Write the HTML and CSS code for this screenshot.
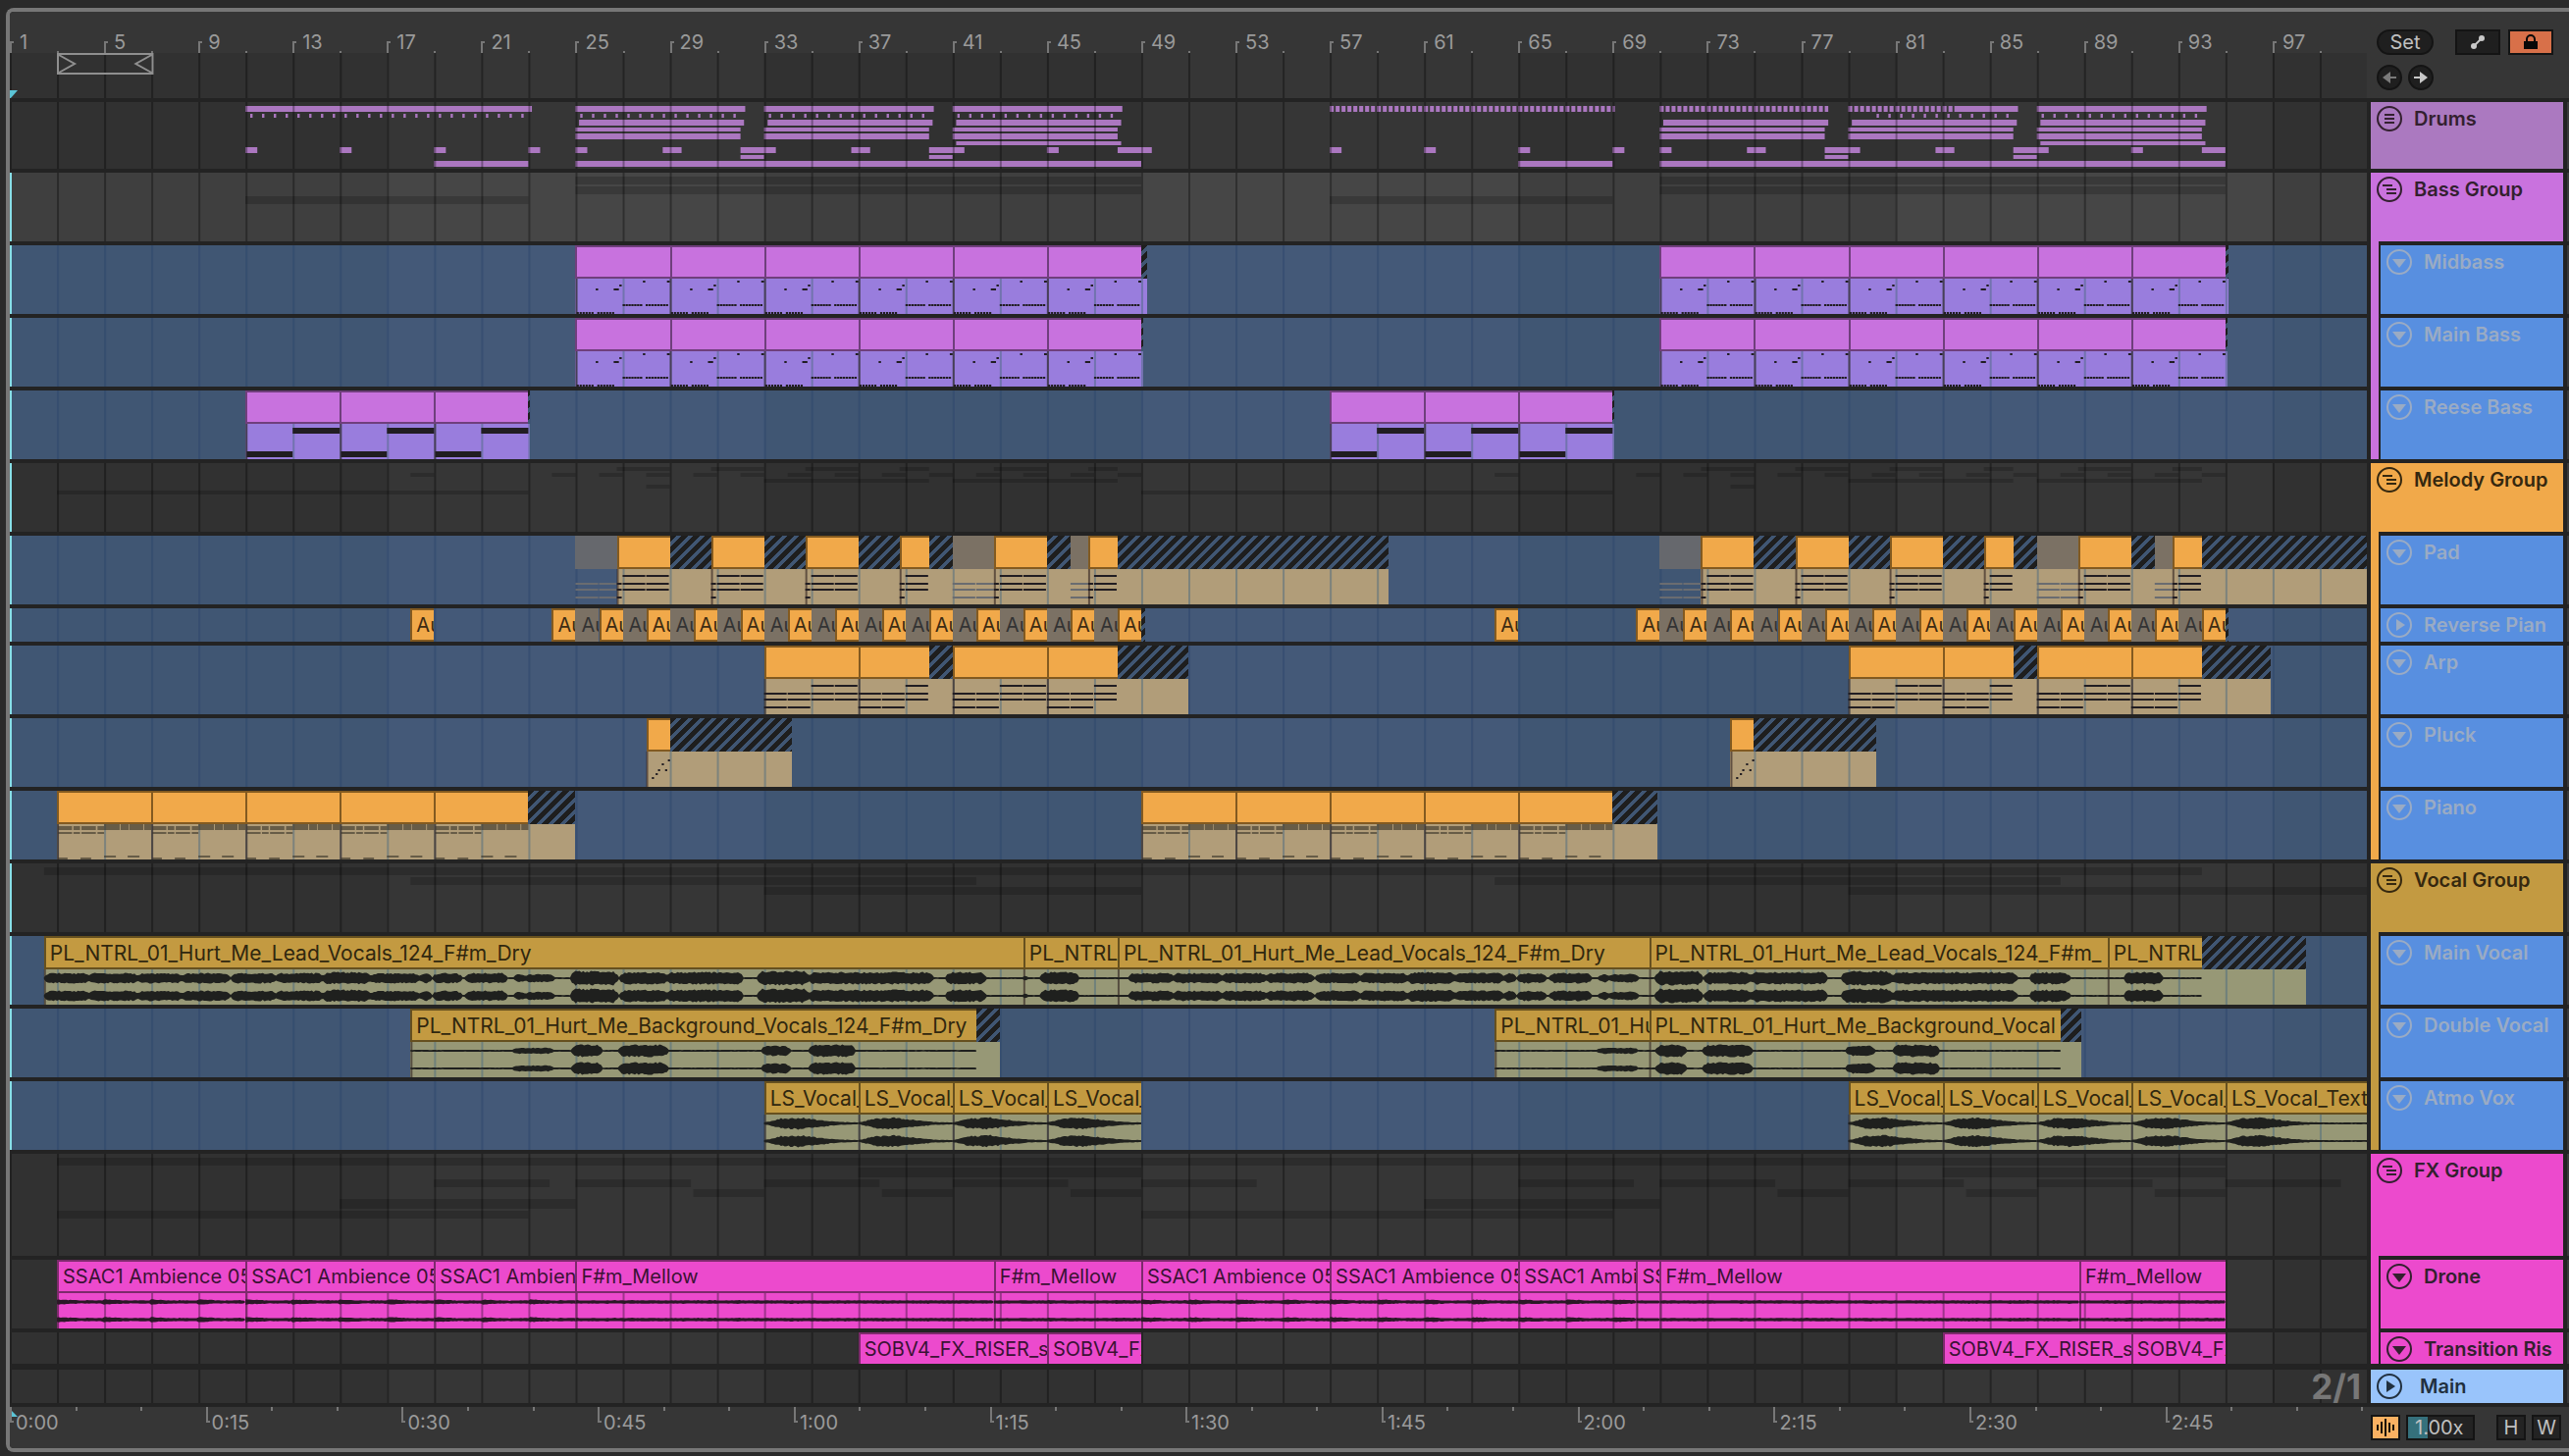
FILE: index.html
```html
<!DOCTYPE html>
<html lang="en">
<head>
  <meta charset="UTF-8" />
  <meta name="viewport" content="width=device-width, initial-scale=1.0"/>
  <title>Arrangement</title>
  <link rel="stylesheet" href="styles.css">
</head>
<body>
  <main class="arranger">
    <header class="top">
      <div class="ruler">
        <div class="ruler-labels" id="bar-ruler"></div>
        <div class="scrub" id="scrub">
          <svg class="loop" viewBox="0 0 98 22" preserveAspectRatio="none" aria-hidden="true">
            <path d="M1 1H97V21H1ZM2 2L18 11L2 20M96 2L80 11L96 20" />
          </svg>
          <svg class="marker marker-top" viewBox="0 0 8 8" aria-hidden="true"><path d="M0 0H8L1 8H0Z" /></svg>
        </div>
      </div>
      <div class="controls">
        <div class="controls-row">
          <button class="pill">Set</button>
          <button class="tool tool-first" aria-label="Automation mode">
            <svg width="16" height="16" viewBox="0 0 16 16"><path d="M4 12L12 4" stroke="#c8c8c8" stroke-width="2"/><circle cx="4" cy="12" r="3" fill="#c8c8c8"/><circle cx="12" cy="4" r="3" fill="#c8c8c8"/></svg>
          </button>
          <button class="tool tool-lock" aria-label="Lock envelopes">
            <svg width="14" height="16" viewBox="0 0 14 16"><path d="M0 7H14V15H0Z" fill="#080808"/><path d="M3 7V5A4 4 0 0 1 11 5V7" fill="none" stroke="#080808" stroke-width="2"/></svg>
          </button>
        </div>
        <div class="controls-row">
          <button class="round" aria-label="Previous locator">
            <svg width="14" height="12" viewBox="0 0 14 12"><path d="M0 6L8 0V5H14V7H8V12Z" fill="#7a7a7a"/></svg>
          </button>
          <button class="round" aria-label="Next locator">
            <svg width="14" height="12" viewBox="0 0 14 12"><path d="M14 6L6 0V5H0V7H6V12Z" fill="#c8c8c8"/></svg>
          </button>
        </div>
      </div>
    </header>

    <section class="tracks" id="tracks"></section>

    <footer class="bottom">
      <div class="time-ruler" id="time-ruler">
        <svg class="marker marker-bottom" viewBox="0 0 8 8" aria-hidden="true"><path d="M0 0L8 8H0Z" /></svg>
      </div>
      <div class="bottom-controls">
        <button class="wave-btn" aria-label="Waveform zoom">
          <svg width="20" height="18" viewBox="0 0 20 18"><path d="M2 6V12M6 3V15M10 0V18M14 4V14M18 6V12" stroke="#1a1206" stroke-width="2"/></svg>
        </button>
        <input class="zoom-input" value="1.00x" aria-label="Waveform height">
        <button class="small-btn small-first">H</button>
        <button class="small-btn">W</button>
      </div>
    </footer>
  </main>
  <script src="script.js"></script>
</body>
</html>
```
FILE: styles.css
```css
* { box-sizing: border-box; }
body {
  margin: 0;
  padding: 8px 0 4px 6px;
  background: #2a2a2a;
  font-family: Inter, "Liberation Sans", sans-serif;
  font-size: 20px;
  color: #9a9a9a;
}
button, input {
  font: inherit;
  color: #c0c0c0;
  padding: 0;
  margin: 0;
  cursor: pointer;
}
.arranger {
  border: 4px solid #777;
  border-right: none;
  border-radius: 8px 0 0 8px;
  background: #232323;
  overflow: hidden;
}

/* bar ruler */
.top {
  display: grid;
  grid-template-columns: 1fr 206px;
  height: 88px;
  background: #363636;
}
.ruler-labels {
  position: relative;
  height: 42px;
  overflow: hidden;
}
.scrub {
  position: relative;
  height: 46px;
}
.bar-label {
  position: absolute;
  top: 30px;
  height: 12px;
  border-left: 2px solid #777;
}
.bar-label::before {
  content: "";
  position: absolute;
  width: 2px;
  height: 2px;
  background: #777;
}
.bar-label span {
  position: absolute;
  left: 8px;
  top: -11px;
  line-height: 24px;
}
.bar-minor {
  position: absolute;
  bottom: 0;
  width: 2px;
  height: 2px;
  background: #777;
}
.loop {
  position: absolute;
  left: 2%;
  top: 0;
  width: 4.1%;
  height: 22px;
}
.loop path { fill: none; stroke: #8f8f8f; stroke-width: 2; }
.marker { position: absolute; left: 0; width: 8px; height: 8px; fill: #5bc4d6; }
.marker-top { bottom: 0; }
.marker-bottom { top: 2px; }

.controls { padding: 18px 0 0 10px; }
.controls-row { display: flex; gap: 6px; margin-bottom: 10px; }
.pill, .round, .tool {
  display: flex;
  align-items: center;
  justify-content: center;
  height: 26px;
  background: #1f1f1f;
  border: 2px solid #141414;
}
.pill { width: 58px; border-radius: 13px; }
.round { width: 26px; border-radius: 13px; }
.tool { width: 46px; }
.tool-first { margin-left: 16px; }
.tool-lock { margin-left: 2px; background: #d87049; }

/* tracks */
.track {
  display: grid;
  grid-template-columns: minmax(0, 1fr) 196px 2px;
  gap: 4px;
  margin-top: 4px;
}
.track.last { margin-top: 6px; }
.edge { background: #3a3a3a; }
.lane { position: relative; overflow: hidden; }
.lane.h34 { height: 34px; }
.lane.h32 { height: 32px; }
.lane.h68 { height: 68px; }
.lane.h70 { height: 70px; }
.lane.h104 { height: 104px; }
.lane, .scrub { background: repeating-linear-gradient(90deg, #313131 0 16%, #363636 16% 32%); }
.lane.selected { background: repeating-linear-gradient(90deg, #3f3f3f 0 16%, #464646 16% 32%); }
.lane.blue { background: repeating-linear-gradient(90deg, #405673 0 16%, #445978 16% 32%); }
.lane svg, .scrub .grid {
  position: absolute;
  inset: 0;
  width: 100%;
  height: 100%;
}
.lane.cursor::after {
  content: "";
  position: absolute;
  left: 0;
  top: 0;
  width: 2px;
  height: 100%;
  background: #88dfe8;
}
.grid { fill: #000; fill-opacity: .32; }
.blue .grid { fill: #2c456b; fill-opacity: .5; }
.overview { fill: #000; fill-opacity: .18; }
.drum-notes { fill: #ab77c0; }

.clip {
  position: absolute;
  top: 0;
  height: 100%;
  display: flex;
  flex-direction: column;
  overflow: hidden;
}
.clip-title {
  height: 34px;
  flex: none;
  padding-left: 4px;
  border: 2px solid;
  border-right: none;
  line-height: 31px;
  white-space: nowrap;
  overflow: hidden;
}
.clip-body { flex: 1; }
.bass .clip-title { background: #c872de; border-color: #6f3f7c; }
.bass .clip-body { background: #997ddd; }
.melody .clip-title { background: #f1a94a; border-color: #835a20; color: #3d2b12; }
.melody .clip-body { background: #b19d79; }
.vocal .clip-title { background: #c39a41; border-color: #66501f; color: #30270f; font-size: 21px; }
.vocal .clip-body { background: #979876; }
.fx .clip-title { background: #ec4acd; border-color: #7d2a6c; color: #3b1234; }
.fx .clip-body { background: #ec4acd; }
.h32 .clip-title { border-bottom: none; }
.clip.tail .clip-title {
  border: none;
  background-color: #405673;
  background-image: linear-gradient(135deg, #1e1e1e 29%, transparent 29% 50%, #1e1e1e 50% 79%, transparent 79%);
  background-size: 12px 12px;
}
.clip.muted .clip-title { background: #7b7164; border-color: transparent; color: #333; }
.clip.muted.bare .clip-title { background: #66686d; }
.clip.muted.bare .clip-body { background: none; }

.body-grid { fill: #4a6a80; fill-opacity: .5; }
.fx .body-grid { fill: #6b2560; fill-opacity: .6; }
.clip-edge { fill: #2b1c1c; fill-opacity: .6; }
.fx .clip-edge { fill: #7d2a6c; fill-opacity: 1; }
.notes { fill: #211d22; }
.notes-soft { fill: #3a3428; fill-opacity: .62; }
.notes-muted { fill: #6a6c70; }
.wave { fill: #1f201e; }
.fx .wave { fill: #2a1826; }

/* track headers */
.head { display: grid; grid-template-columns: 1fr; }
.head.child { grid-template-columns: 8px 1fr; gap: 2px; }
.strip { margin-top: -4px; }
.head-box {
  display: flex;
  align-items: flex-start;
  gap: 12px;
  padding: 4px 0 0 6px;
  overflow: hidden;
  color: #33202f;
}
.head-name {
  font-weight: 600;
  line-height: 26px;
  white-space: nowrap;
}
.fold { width: 26px; height: 26px; background: none; border: none; color: inherit; }
.fold svg { display: block; }
.c-drums { background: #ab79c0; }
.c-bass { background: #c972de; }
.c-melody { background: #f1a94a; }
.c-vocal { background: #c39a41; }
.c-fx { background: #ec4acd; }
.c-main { background: #99c4fb; color: #21303f; gap: 18px; }
.c-blue { background: #588fe0; color: #9aabc4; }
.c-melody.head-box, .c-vocal.head-box { color: #35280f; }
.position {
  position: absolute;
  right: 6px;
  top: 0;
  font-size: 35px;
  font-weight: 700;
  line-height: 34px;
  color: #777;
}

/* time ruler */
.bottom {
  display: grid;
  grid-template-columns: 1fr 206px;
  height: 46px;
  border-top: 4px solid #232323;
  background: #363636;
}
.time-ruler { position: relative; overflow: hidden; }
.time-label {
  position: absolute;
  top: 0;
  height: 16px;
  border-left: 2px solid #777;
}
.time-label::before {
  content: "";
  position: absolute;
  bottom: 0;
  width: 2px;
  height: 2px;
  background: #777;
}
.time-label span {
  position: absolute;
  left: 4px;
  top: 4px;
  line-height: 24px;
}
.time-minor {
  position: absolute;
  top: 0;
  width: 2px;
  height: 4px;
  background: #777;
}
.bottom-controls {
  display: flex;
  align-items: flex-start;
  gap: 6px;
  padding: 8px 0 0 4px;
}
.wave-btn, .small-btn, .zoom-input {
  height: 26px;
  border: 2px solid #141414;
  background: #232323;
}
.wave-btn {
  display: flex;
  align-items: center;
  justify-content: center;
  width: 30px;
  background: #fab162;
}
.zoom-input {
  width: 70px;
  padding-left: 7px;
  background: linear-gradient(90deg, #35707c 20px, #232323 20px);
}
.small-btn { width: 30px; line-height: 22px; }
.small-first { margin-left: 16px; }
```
FILE: script.js
```js
const BARS = 100;
const LINE = 0.0833;   // grid line width, in bars

const LEAD = "PL_NTRL_01_Hurt_Me_Lead_Vocals_124_F#m_Dry";
const BACKING = "PL_NTRL_01_Hurt_Me_Background_Vocals_124_F#m_Dry";

// run the same list of [start, end, ...] again for the second drop
function twice(list, shift = 46) {
  return list.concat(list.map(i => [i[0] + shift, i[1] + shift, ...i.slice(2)]));
}

// ---------- notes: [x, x2, y, h] in bars and pixels ----------

function drumNotes() {
  const n = [];
  const add = (x, x2, y, h) => n.push([x, x2, y, h]);
  const dash = (from, to, step, w, y, h) => {
    for (let x = from; x < to; x += step) add(x, Math.min(x + w, to), y, h);
  };
  add(11, 23.15, 4, 6);
  [25, 33, 41, 87].forEach(s => add(s, s + 7.2, 4, 6));
  dash(57, 69.1, 0.25, 0.17, 4, 6);
  dash(71, 78.15, 0.25, 0.17, 4, 6);
  dash(79, 83.5, 0.25, 0.17, 4, 6);
  add(83.5, 86.2, 4, 6);
  dash(11.2, 23, 0.5, 0.1, 12, 4);
  [25.2, 33.2, 41.2, 87.2].forEach(s => dash(s, s + 6.7, 0.5, 0.1, 12, 4));
  dash(80.2, 86, 0.5, 0.1, 12, 4);
  [25, 33, 41, 71, 79, 87].forEach(s => {
    add(s + 0.15, s + 7.15, 18, 6);
    add(s, s + 7, 26, 4);
    add(s, s + 7, 32, 6);
  });
  [41, 87].forEach(s => add(s + 0.15, s + 7.15, 40, 4));
  twice([[11, 11.5], [15, 15.5], [19, 19.5], [23, 23.5], [25, 25.5], [28.7, 29.5],
    [32, 33.5], [36.7, 37.5], [40, 41.5], [45, 45.5]]).forEach(b => add(b[0], b[1], 46, 6));
  add(48, 49.45, 46, 6);
  add(94, 95, 46, 6);
  twice([[32, 33], [40, 41]]).forEach(b => add(b[0], b[1], 54, 4));
  twice([[19, 23], [25, 49]]).forEach(b => add(b[0], b[1], 60, 6));
  return n;
}

function bassNotes(s) {
  const n = [[s + 0.86, s + 0.96, 44, 2], [s + 1.62, s + 1.84, 44, 2], [s + 1.86, s + 1.96, 40, 2],
    [s + 2.86, s + 2.96, 36, 2], [s + 3.88, s + 4, 36, 2]];
  for (let i = 0; i < 13; i++) {
    if (i !== 6) n.push([s + 0.05 + i * 0.125, s + 0.14 + i * 0.125, 68, 2]);
  }
  for (let i = 0; i < 16; i++) {
    if (i !== 7) n.push([s + 2 + i * 0.122, s + 2.1 + i * 0.122, 60, 2]);
  }
  return n;
}

function reeseNotes(s) {
  return [[s + 0.05, s + 2, 62, 6], [s + 2, s + 4, 38, 6]];
}

function chordNotes(s, end, shift = 0) {
  // one chord per bar, the voicing moves up after two bars
  const n = [];
  const low = s - shift + 2;
  for (let b = Math.floor(s); b < end; b++) {
    const x = Math.max(b, s);
    const x2 = Math.min(b + 0.96, end);
    n.push([x, x2, 48, 2], [x, x2, 54, 2]);
    n.push([x, x2, b < low - 0.01 ? 62 : 40, 2]);
  }
  return n;
}

function pluckNotes(s) {
  return [[0.24, 60], [0.4, 56], [0.5, 52], [0.66, 46], [0.8, 52], [0.92, 42]]
    .map(p => [s + p[0], s + p[0] + 0.09, p[1], 2]);
}

function pianoNotes(s) {
  return [[0.05, 0.64, 36, 4], [0.7, 0.98, 36, 4], [1.04, 1.65, 36, 4], [1.72, 2, 36, 4],
    [0.05, 0.64, 42, 2], [0.7, 0.98, 42, 2], [1.04, 1.65, 42, 2], [1.72, 2, 42, 2],
    [2, 2.66, 34, 6], [2.7, 3.04, 34, 6], [3.07, 3.66, 34, 6], [3.7, 4, 34, 6],
    [0.05, 0.45, 68, 2], [1, 1.45, 68, 2], [2, 2.5, 66, 2], [3, 3.5, 66, 2]]
    .map(p => [s + p[0], s + p[1], p[2], p[3]]);
}

// ---------- clips: [start, end, kind, title] ----------

const padClips = twice([[25, 26.75, "muted bare"], [41, 42.75, "muted"], [46, 46.75, "muted"],
  [26.75, 29, ""], [30.75, 33, ""], [34.75, 37, ""], [38.75, 40, ""], [42.75, 45, ""], [46.75, 48, ""],
  [29, 30.75, "tail"], [33, 34.75, "tail"], [37, 38.75, "tail"], [40, 41, "tail"], [45, 46, "tail"]])
  .concat([[48, 59.5, "tail"], [94, 101, "tail"]]);

const reverseClips = twice([[18, 19, "", "Au"], [49, 49.15, "tail"]]);
for (let b = 24; b < 49; b++) {
  const kind = b % 2 ? "muted" : "";
  reverseClips.push([b, b + 1, kind, "Au"], [b + 46, b + 47, kind, "Au"]);
}

const arpClips = twice([[33, 37, ""], [37, 40, ""], [40, 41, "tail"], [41, 45, ""], [45, 48, ""]])
  .concat([[48, 51, "tail"], [94, 96.9, "tail"]]);

const starts = (list, len) => list.map(s => [s, s + len, ""]);

const leadBlobs = twice([[2.46, 4.36, 5], [4.36, 6.44, 5], [6.44, 8.3, 5], [8.3, 10.3, 5], [10.4, 12.3, 5],
  [12.3, 14.3, 5], [14.3, 16.3, 6], [16.3, 18.37, 5], [18.4, 18.9, 5], [18.95, 20.15, 5], [20.35, 22.1, 5],
  [22.4, 22.87, 4], [22.87, 24.1, 4], [24.8, 26.8, 7], [26.9, 28.9, 6], [28.9, 32.1, 6],
  [32.75, 34.87, 7], [34.9, 40.14, 6], [40.7, 42.37, 6]])
  .concat([[44, 44.15, 3], [44.73, 46.36, 6], [90.7, 92.35, 6]]);

const backBlobs = twice([[22.35, 24.06, 3], [24.86, 26.1, 6], [26.85, 28.9, 6], [32.9, 34.1, 5], [34.93, 36.87, 6]]);

const tracks = [
  { name: "Drums", color: "drums", icon: "list", h: 68, drums: drumNotes() },
  { name: "Bass Group", color: "bass", icon: "group", h: 70, cls: "selected cursor",
    overview: twice([[25, 49, 4, 8], [25, 49, 14, 8], [11, 23, 24, 8]]) },
  { name: "Midbass", group: "bass", icon: "down", h: 70,
    clips: twice(starts([25, 29, 33, 37, 41, 45], 4)).concat([[49, 49.25, "tail"], [95, 95.15, "tail"]]),
    notes: twice(starts([25, 29, 33, 37, 41, 45], 4)).flatMap(c => bassNotes(c[0])) },
  { name: "Main Bass", group: "bass", icon: "down", h: 70,
    clips: twice(starts([25, 29, 33, 37, 41, 45], 4)).concat([[49, 49.08, "tail"], [95, 95.08, "tail"]]),
    notes: twice(starts([25, 29, 33, 37, 41, 45], 4)).flatMap(c => bassNotes(c[0])) },
  { name: "Reese Bass", group: "bass", icon: "down", h: 70,
    clips: twice(starts([11, 15, 19], 4)).concat([[23, 23.08, "tail"], [69, 69.08, "tail"]]),
    notes: twice(starts([11, 15, 19], 4)).flatMap(c => reeseNotes(c[0])) },
  { name: "Melody Group", color: "melody", icon: "group", h: 70, cls: "cursor",
    overview: twice([[26.75, 29, 4, 4], [30.75, 33, 4, 4], [34.75, 37, 4, 4], [38.75, 40, 4, 4], [42.75, 45, 4, 4],
      [46.75, 48, 4, 4], [18, 19, 10, 4], [24, 25, 10, 4], [26, 27, 10, 4], [28, 29, 10, 4], [30, 31, 10, 4],
      [32, 33, 10, 4], [34, 35, 10, 4], [36, 37, 10, 4], [38, 39, 10, 4], [40, 41, 10, 4], [42, 43, 10, 4],
      [44, 45, 10, 4], [46, 47, 10, 4], [48, 49, 10, 4], [33, 40, 16, 4], [41, 48, 16, 4], [28, 29, 22, 4],
      [3, 23, 28, 4]]) },
  { name: "Pad", group: "melody", icon: "down", h: 70, clips: padClips,
    notes: padClips.filter(c => c[2] === "").flatMap(c => chordNotes(c[0], c[1], 1.75)),
    muted: padClips.filter(c => c[2].startsWith("muted")).flatMap(c => chordNotes(c[0], c[1])) },
  { name: "Reverse Pian", group: "melody", icon: "right", h: 34, clips: reverseClips },
  { name: "Arp", group: "melody", icon: "down", h: 70, clips: arpClips,
    notes: arpClips.filter(c => c[2] === "").flatMap(c => chordNotes(c[0], c[1])) },
  { name: "Pluck", group: "melody", icon: "down", h: 70,
    clips: twice([[28, 29, ""], [29, 34.2, "tail"]]), notes: pluckNotes(28).concat(pluckNotes(74)) },
  { name: "Piano", group: "melody", icon: "down", h: 70,
    clips: twice(starts([3, 7, 11, 15, 19], 4)).concat([[23, 25, "tail"], [69, 70.9, "tail"]]),
    soft: twice(starts([3, 7, 11, 15, 19], 4)).flatMap(c => pianoNotes(c[0])) },
  { name: "Vocal Group", color: "vocal", icon: "group", h: 70, cls: "cursor",
    overview: [[2.45, 94, 4, 8], [18, 42, 14, 8], [64, 88, 14, 8], [33, 49, 24, 8], [79, 101, 24, 8]] },
  { name: "Main Vocal", group: "vocal", icon: "down", h: 70,
    clips: [[2.45, 44, "", LEAD], [44, 48, "", "PL_NTRL_"], [48, 70.55, "", LEAD],
      [70.55, 90, "", "PL_NTRL_01_Hurt_Me_Lead_Vocals_124_F#m_"], [90, 94, "", "PL_NTRL_"], [94, 98.4, "tail"]],
    waves: [[2.45, 94, leadBlobs]] },
  { name: "Double Vocal", group: "vocal", icon: "down", h: 70,
    clips: [[18, 42, "", BACKING], [42, 43, "tail"], [64, 70.55, "", "PL_NTRL_01_Hu"],
      [70.55, 88, "", "PL_NTRL_01_Hurt_Me_Background_Vocal"], [88, 88.9, "tail"]],
    waves: [[18, 42, backBlobs], [64, 88, backBlobs]] },
  { name: "Atmo Vox", group: "vocal", icon: "down", h: 70,
    clips: twice([[33, 37], [37, 41], [41, 45], [45, 49]]).map(c => [c[0], c[1], "", "LS_Vocal_"])
      .concat([[95, 101, "", "LS_Vocal_Text"]]), swells: true },
  { name: "FX Group", color: "fx", icon: "group", h: 104,
    overview: [[3, 95, 4, 8], [37, 49, 14, 10], [83, 95, 14, 10], [19, 23.9, 26, 8], [25, 29.9, 26, 8],
      [33, 37.9, 26, 8], [41, 45.9, 26, 8], [49, 53.9, 26, 8], [65, 69.9, 26, 8], [71, 75.9, 26, 8],
      [79, 83.9, 26, 8], [87, 91.9, 26, 8], [95, 99.9, 26, 8], [30, 33, 36, 8], [38, 41, 36, 8], [46, 49, 36, 8],
      [76, 79, 36, 8], [84, 87, 36, 8], [92, 95, 36, 8], [15, 25, 46, 10], [61, 71, 46, 10],
      [3, 23, 58, 8], [49, 69, 58, 8]] },
  { name: "Drone", group: "fx", own: true, icon: "down", h: 70,
    clips: [[3, 11, "", "SSAC1 Ambience 05"], [11, 19, "", "SSAC1 Ambience 05"], [19, 25, "", "SSAC1 Ambien"],
      [25, 42.75, "", "F#m_Mellow"], [42.75, 49, "", "F#m_Mellow"], [49, 57, "", "SSAC1 Ambience 05"],
      [57, 65, "", "SSAC1 Ambience 05"], [65, 70, "", "SSAC1 Ambi"], [70, 71, "", "SS"],
      [71, 88.8, "", "F#m_Mellow"], [88.8, 95, "", "F#m_Mellow"]], drone: true },
  { name: "Transition Ris", group: "fx", own: true, icon: "down", h: 32,
    clips: twice([[37, 45, "", "SOBV4_FX_RISER_s"], [45, 49, "", "SOBV4_FX"]]) },
  { name: "Main", color: "main", icon: "right", h: 34, cls: "", last: true }
];

const icons = {
  list: '<path d="M8 9H18M8 13H18M8 17H18" />',
  group: '<path d="M6 9H16M10 13H20M10 17H20" />',
  down: '<path d="M6 10H20L13 19Z" fill="currentColor" stroke="none" />',
  right: '<path d="M10 7L19 13L10 19Z" fill="currentColor" stroke="none" />'
};

function rects(list, cls) {
  if (!list || !list.length) return "";
  return `<g class="${cls}">` + list.map(r =>
    `<rect x="${(r[0] - 1).toFixed(3)}" y="${r[2]}" width="${(r[1] - r[0]).toFixed(3)}" height="${r[3]}"/>`
  ).join("") + "</g>";
}

function gridRects(h) {
  const list = [];
  for (let b = 1; b <= BARS; b += 2) list.push([b, b + LINE, 0, h]);
  return list;
}

// cheap repeatable noise so that the waveforms stay the same on every load
function noise(i) {
  const v = Math.sin(i * 12.9898) * 43758.5453;
  return v - Math.floor(v);
}

function wavePath(from, to, amp, mid) {
  const step = 0.08;
  let up = "";
  let down = "";
  for (let x = from; x <= to; x += step) {
    const i = Math.round(x * 100);
    up += `L${(x - 1).toFixed(2)} ${(mid - amp(x) * (0.8 + noise(i) * 0.3)).toFixed(1)}`;
    down = `L${(x - 1).toFixed(2)} ${(mid + amp(x) * (0.8 + noise(i + 7) * 0.3)).toFixed(1)}` + down;
  }
  return `<path d="M${from - 1} ${mid}${up}L${(to - 1).toFixed(2)} ${mid}${down}Z"/>`;
}

function blobAmp(blobs) {
  return x => {
    const b = blobs.find(o => x >= o[0] && x <= o[1]);
    if (!b) return 1;
    const edge = Math.min(x - b[0], b[1] - x);
    return 1 + (b[2] - 1) * Math.min(1, 0.45 + edge * 3);
  };
}

function swellAmp(start) {
  const pts = [[0, 1], [0.3, 2.5], [0.7, 5], [1.2, 5.5], [1.6, 6], [2, 4.5], [2.6, 3], [3.2, 1.6], [4, 1], [9, 1]];
  return x => {
    const t = x - start;
    const i = Math.max(1, pts.findIndex(p => p[0] > t));
    const a = pts[i - 1];
    const b = pts[i];
    return a[1] + (b[1] - a[1]) * (t - a[0]) / (b[0] - a[0]);
  };
}

function waves(t) {
  let out = "";
  const both = (from, to, amp) => {
    out += wavePath(from, to, amp, 43) + wavePath(from, to, amp, 61);
  };
  if (t.waves) t.waves.forEach(w => both(w[0], w[1], blobAmp(w[2])));
  if (t.swells) t.clips.forEach(c => both(c[0], c[1], swellAmp(c[0])));
  if (t.drone) {
    t.clips.forEach(c => {
      const beat = c[3].startsWith("SS");
      both(c[0], c[1], x => beat && (x + 1) % 2 < 1.2 ? 2.6 - (x + 1) % 2 : 1.7);
    });
  }
  return out ? `<g class="wave">${out}</g>` : "";
}

function bodyLines(t) {
  if (t.h < 70) return "";
  const grid = [];
  for (let b = 1; b <= BARS; b += 2) {
    if (t.clips.some(c => !c[2].includes("bare") && b >= c[0] && b < c[1])) grid.push([b, b + LINE, 34, 36]);
  }
  const edges = t.clips.filter(c => c[2] === "").map(c => [c[0], c[0] + LINE, 34, 36]);
  return rects(grid, "body-grid") + rects(edges, "clip-edge");
}

function lane(t) {
  const svg = inner => `<svg viewBox="0 0 ${BARS} ${t.h}" preserveAspectRatio="none" aria-hidden="true">${inner}</svg>`;
  let html = svg(rects(t.overview, "overview") + rects(t.drums, "drum-notes") + rects(gridRects(t.h), "grid"));
  if (t.clips) {
    html += t.clips.map(c =>
      `<div class="clip ${c[2]}" style="left:${c[0] - 1}%;width:${c[1] - c[0]}%">
        <div class="clip-title">${c[3] || ""}</div>
        <div class="clip-body"></div>
      </div>`).join("");
    html += svg(bodyLines(t) + rects(t.soft, "notes-soft") + rects(t.muted, "notes-muted") + rects(t.notes, "notes") + waves(t));
  }
  if (t.last) html += '<span class="position">2/1</span>';
  return html;
}

function head(t) {
  const color = t.group ? (t.own ? t.group : "blue") : t.color;
  const box = `<div class="head-box c-${color}">
      <button class="fold" aria-label="Fold ${t.name}">
        <svg width="26" height="26" viewBox="0 0 26 26" fill="none" stroke="currentColor" stroke-width="2"><circle cx="13" cy="13" r="12"/>${icons[t.icon]}</svg>
      </button>
      <span class="head-name">${t.name}</span>
    </div>`;
  if (!t.group) return `<div class="head">${box}</div>`;
  return `<div class="head child"><div class="strip c-${t.group}"></div>${box}</div>`;
}

function renderTracks() {
  document.getElementById("tracks").innerHTML = tracks.map(t => {
    const blue = t.group && !t.own ? "blue cursor" : "";
    return `<div class="track ${t.last ? "last" : ""}">
      <div class="lane h${t.h} ${t.group || ""} ${blue} ${t.cls || ""}">${lane(t)}</div>
      ${head(t)}
      <div class="edge"></div>
    </div>`;
  }).join("");
}

function renderRulers() {
  let bars = "";
  for (let b = 1; b <= BARS; b += 2) {
    bars += b % 4 === 1
      ? `<div class="bar-label" style="left:${b - 1}%"><span>${b}</span></div>`
      : `<div class="bar-minor" style="left:${b - 1}%"></div>`;
  }
  document.getElementById("bar-ruler").innerHTML = bars;

  document.getElementById("scrub").insertAdjacentHTML("afterbegin",
    `<svg class="grid" viewBox="0 0 ${BARS} 46" preserveAspectRatio="none">${rects(gridRects(46), "grid-lines")}</svg>`);

  // 5 seconds between ticks, a label every 15
  let time = "";
  for (let s = 0; s <= 180; s += 5) {
    const left = (s / 15 * 8.314).toFixed(2);
    const label = Math.floor(s / 60) + ":" + String(s % 60).padStart(2, "0");
    time += s % 15 === 0 && s < 180
      ? `<div class="time-label" style="left:${left}%"><span>${label}</span></div>`
      : `<div class="time-minor" style="left:${left}%"></div>`;
  }
  document.getElementById("time-ruler").insertAdjacentHTML("beforeend", time);
}

renderTracks();
renderRulers();
```
